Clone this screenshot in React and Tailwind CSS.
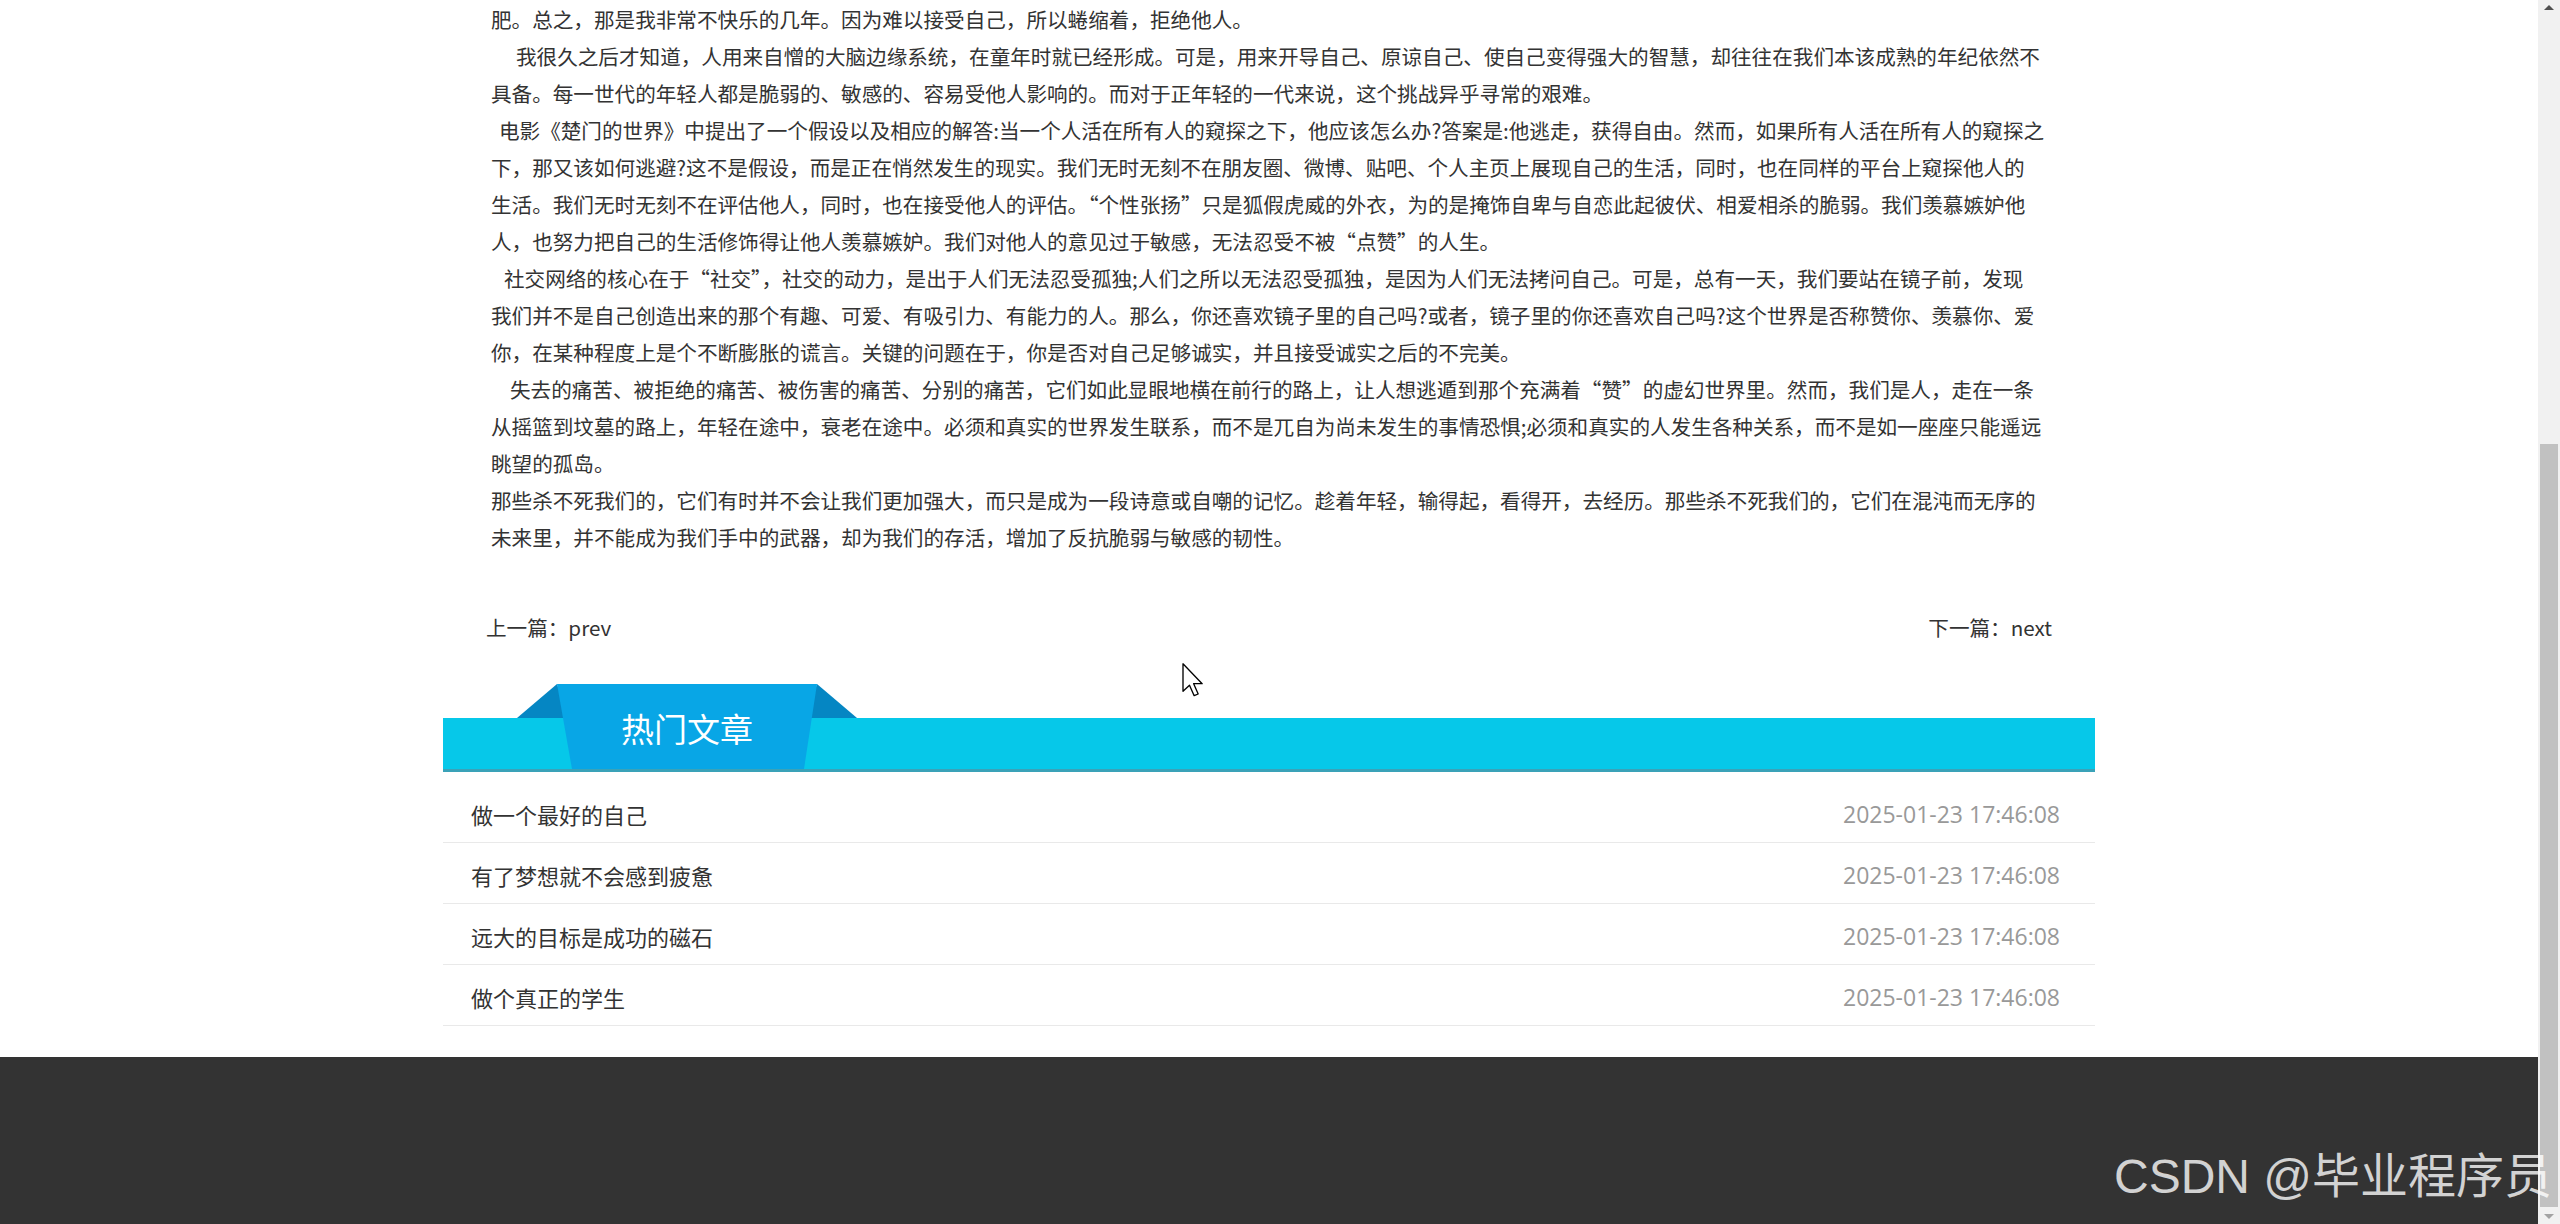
const paragraphs = [
  {
    indent: '',
    lines: ['肥。总之，那是我非常不快乐的几年。因为难以接受自己，所以蜷缩着，拒绝他人。'],
  },
  {
    indent: 'pl-[25px]',
    lines: [
      '我很久之后才知道，人用来自憎的大脑边缘系统，在童年时就已经形成。可是，用来开导自己、原谅自己、使自己变得强大的智慧，却往往在我们本该成熟的年纪依然不',
      '具备。每一世代的年轻人都是脆弱的、敏感的、容易受他人影响的。而对于正年轻的一代来说，这个挑战异乎寻常的艰难。',
    ],
  },
  {
    indent: 'pl-[8px]',
    lines: [
      '电影《楚门的世界》中提出了一个假设以及相应的解答:当一个人活在所有人的窥探之下，他应该怎么办?答案是:他逃走，获得自由。然而，如果所有人活在所有人的窥探之',
      '下，那又该如何逃避?这不是假设，而是正在悄然发生的现实。我们无时无刻不在朋友圈、微博、贴吧、个人主页上展现自己的生活，同时，也在同样的平台上窥探他人的',
      '生活。我们无时无刻不在评估他人，同时，也在接受他人的评估。“个性张扬”只是狐假虎威的外衣，为的是掩饰自卑与自恋此起彼伏、相爱相杀的脆弱。我们羡慕嫉妒他',
      '人，也努力把自己的生活修饰得让他人羡慕嫉妒。我们对他人的意见过于敏感，无法忍受不被“点赞”的人生。',
    ],
  },
  {
    indent: 'pl-[13px]',
    lines: [
      '社交网络的核心在于“社交”，社交的动力，是出于人们无法忍受孤独;人们之所以无法忍受孤独，是因为人们无法拷问自己。可是，总有一天，我们要站在镜子前，发现',
      '我们并不是自己创造出来的那个有趣、可爱、有吸引力、有能力的人。那么，你还喜欢镜子里的自己吗?或者，镜子里的你还喜欢自己吗?这个世界是否称赞你、羡慕你、爱',
      '你，在某种程度上是个不断膨胀的谎言。关键的问题在于，你是否对自己足够诚实，并且接受诚实之后的不完美。',
    ],
  },
  {
    indent: 'pl-[19px]',
    lines: [
      '失去的痛苦、被拒绝的痛苦、被伤害的痛苦、分别的痛苦，它们如此显眼地横在前行的路上，让人想逃遁到那个充满着“赞”的虚幻世界里。然而，我们是人，走在一条',
      '从摇篮到坟墓的路上，年轻在途中，衰老在途中。必须和真实的世界发生联系，而不是兀自为尚未发生的事情恐惧;必须和真实的人发生各种关系，而不是如一座座只能遥远',
      '眺望的孤岛。',
    ],
  },
  {
    indent: '',
    lines: [
      '那些杀不死我们的，它们有时并不会让我们更加强大，而只是成为一段诗意或自嘲的记忆。趁着年轻，输得起，看得开，去经历。那些杀不死我们的，它们在混沌而无序的',
      '未来里，并不能成为我们手中的武器，却为我们的存活，增加了反抗脆弱与敏感的韧性。',
    ],
  },
]

const hotArticles = [
  { title: '做一个最好的自己', time: '2025-01-23 17:46:08' },
  { title: '有了梦想就不会感到疲惫', time: '2025-01-23 17:46:08' },
  { title: '远大的目标是成功的磁石', time: '2025-01-23 17:46:08' },
  { title: '做个真正的学生', time: '2025-01-23 17:46:08' },
]

function Article() {
  return (
    <div className="pl-[48px] pt-[1px] text-[20.6px] leading-[37px] text-[#333]">
      {paragraphs.map((p, i) => (
        <div key={i}>
          {p.lines.map((line, j) => (
            <div key={j} className={['whitespace-nowrap', j === 0 ? p.indent : ''].join(' ')}>
              {line}
            </div>
          ))}
        </div>
      ))}
    </div>
  )
}

function HotHeader() {
  return (
    <div className="relative h-[88px] mt-[42px] flex flex-col justify-end">
      <div className="h-[54px] bg-[#06c8e9] border-b-[3px] border-[#3aa2b8]" />
      <svg className="absolute left-[74px] top-0" width="340" height="85" viewBox="0 0 340 85">
        <polygon points="0,34 40,0 52,34" fill="#0586c3" />
        <polygon points="288,34 300,0 340,34" fill="#0586c3" />
        <polygon points="40,0 300,0 287,85 55,85" fill="#08a6e6" />
      </svg>
      <div className="absolute left-[114px] top-0 w-[260px] h-[90px] flex items-center justify-center text-[33px] text-white">
        热门文章
      </div>
    </div>
  )
}

function HotList() {
  return (
    <div className="pt-[10px]">
      {hotArticles.map((a, i) => (
        <div
          key={i}
          className="h-[61px] pt-[4px] pl-[28px] pr-[35px] flex items-center justify-between border-b border-[#e9e9e9]"
        >
          <span className="text-[22px] text-[#333]">{a.title}</span>
          <span className="text-[23px] text-[#999] font-['Open_Sans',sans-serif]">{a.time}</span>
        </div>
      ))}
    </div>
  )
}

function Scrollbar() {
  return (
    <div className="w-[22px] h-[1224px] bg-[#f1f1f1] flex flex-col items-center">
      <div className="h-[22px] w-full flex items-start justify-center pt-[5px]">
        <div className="w-0 h-0 border-l-[5px] border-r-[5px] border-b-[5px] border-l-transparent border-r-transparent border-b-[#505050]" />
      </div>
      <div className="mt-[422px] w-[18px] h-[763px] bg-[#c1c1c1]" />
      <div className="flex-1 w-full flex items-end justify-center pb-[5px]">
        <div className="w-0 h-0 border-l-[5px] border-r-[5px] border-t-[5px] border-l-transparent border-r-transparent border-t-[#a3a3a3]" />
      </div>
    </div>
  )
}

export default function App() {
  return (
    <div className="relative w-[2560px] h-[1224px] overflow-hidden flex bg-white font-['Noto_Sans_CJK_SC','Noto_Sans',sans-serif]">
      <div className="flex-1 h-[1224px] flex flex-col overflow-hidden">
        <div className="w-[1652px] mx-auto">
          <Article />

          <div className="mt-[56px] h-[30px] px-[43px] flex items-center justify-between text-[20.6px] text-[#333]">
            <span>上一篇：prev</span>
            <span>下一篇：next</span>
          </div>

          <HotHeader />
          <HotList />
        </div>

        <div className="mt-[31px] h-[167px] shrink-0 w-full bg-[#333]" />
      </div>

      <Scrollbar />

      <svg className="absolute left-[1182px] top-[663px]" width="22" height="35" viewBox="0 0 13 21">
        <path
          d="M0.5 0.5 L0.5 17 L4.4 13.3 L7.2 19.6 L9.6 18.6 L6.9 12.4 L12 12.4 Z"
          fill="#fff"
          stroke="#000"
          strokeWidth="0.8"
          strokeLinejoin="round"
        />
      </svg>

      <div className="absolute left-[2114px] top-[1149px] leading-[56px] text-[48px] text-[rgba(255,255,255,0.78)] whitespace-nowrap font-['Liberation_Sans','Noto_Sans_CJK_SC',sans-serif]">
        CSDN @毕业程序员
      </div>
    </div>
  )
}
